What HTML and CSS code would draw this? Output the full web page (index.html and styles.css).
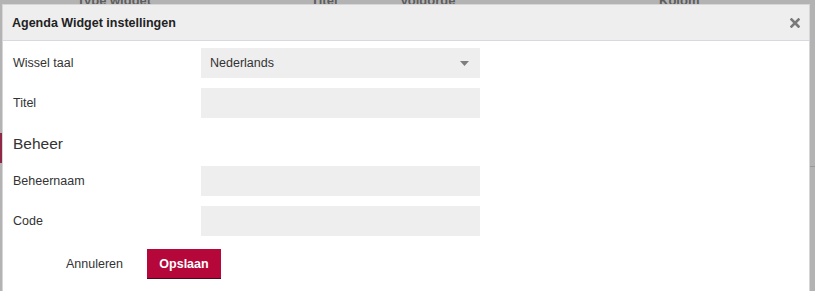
FILE: index.html
```html
<!DOCTYPE html>
<html lang="nl">
<head>
<meta charset="utf-8">
<title>Agenda Widget instellingen</title>
<link rel="stylesheet" href="styles.css">
</head>
<body>
<div class="page">
  <div class="sidebar"><div class="sidebar-active"></div></div>
  <div class="content">
    <div class="thead">
      <span class="th th-type">Type widget</span>
      <span class="th th-title">Titel</span>
      <span class="th th-order">Volgorde</span>
      <span class="th th-col">Kolom</span>
    </div>
    <div class="trow"></div>
  </div>
</div>

<div class="modal">
  <div class="modal-header">
    <h1 class="modal-title">Agenda Widget instellingen</h1>
    <button class="modal-close" aria-label="Sluiten">
      <svg width="10" height="10" viewBox="0 0 10 10"><path d="M1.5 1.5 L8.5 8.5 M8.5 1.5 L1.5 8.5" stroke="#7a7a7a" stroke-width="2.6" stroke-linecap="square"/></svg>
    </button>
  </div>
  <div class="modal-body">
    <div class="form-row">
      <label class="form-label">Wissel taal</label>
      <div class="select">
        <span>Nederlands</span>
        <svg class="caret" width="9" height="5" viewBox="0 0 9 5"><path d="M0 0 H9 L4.5 5 Z" fill="#7d7d7d"/></svg>
      </div>
    </div>
    <div class="form-row">
      <label class="form-label">Titel</label>
      <div class="input"></div>
    </div>
    <h2 class="section-title">Beheer</h2>
    <div class="form-row">
      <label class="form-label">Beheernaam</label>
      <div class="input"></div>
    </div>
    <div class="form-row">
      <label class="form-label">Code</label>
      <div class="input"></div>
    </div>
    <div class="actions">
      <button class="btn-link">Annuleren</button>
      <button class="btn-primary">Opslaan</button>
    </div>
  </div>
</div>
</body>
</html>
```

FILE: styles.css
```css
* { box-sizing: border-box; }

html, body {
  margin: 0;
  padding: 0;
  height: 100%;
  overflow: hidden;
}

body {
  background: #b3b3b3;
  font-family: "Liberation Sans", Arial, sans-serif;
  color: #333;
}

.page {
  display: flex;
  height: 100%;
}

.sidebar {
  width: 2px;
  padding-top: 133px;
}

.sidebar-active {
  height: 30px;
  background: #8e2846;
}

.content {
  flex: 1;
}

.thead {
  position: relative;
  height: 174px;
  border-bottom: 1px solid #999;
  margin-top: -7px;
  font-size: 13px;
  color: #5d5d5d;
  font-weight: bold;
}

.th {
  position: absolute;
  top: 0;
}
.th-type { left: 75px; }
.th-title { left: 309px; }
.th-order { left: 398px; }
.th-col { left: 657px; }

.modal {
  position: absolute;
  left: 2px;
  top: 4px;
  width: 808px;
  height: 300px;
  background: #fff;
  border: 1px solid #d6d6d6;
}

.modal-header {
  display: flex;
  align-items: center;
  justify-content: space-between;
  height: 36px;
  padding: 0 9px 0 9px;
  background: #eeeeee;
  border-bottom: 1px solid #d8d8e0;
}

.modal-title {
  margin: 0;
  font-size: 12.5px;
  font-weight: bold;
  color: #222;
}

.modal-close {
  border: 0;
  background: none;
  padding: 0;
  width: 10px;
  height: 10px;
  display: flex;
  margin-top: 1px;
}

.modal-body {
  padding: 7px 10px 0 10px;
}

.form-row {
  display: flex;
  align-items: center;
  margin-bottom: 10px;
}

.form-label {
  width: 188px;
  font-size: 12.5px;
  color: #333;
}

.select, .input {
  width: 279px;
  height: 30px;
  background: #eeeeee;
}

.select {
  display: flex;
  align-items: center;
  justify-content: space-between;
  padding: 0 11px 0 9px;
  font-size: 12.5px;
  color: #333;
}

.caret { margin-top: 1px; }

.section-title {
  margin: 17px 0 13px 0;
  font-size: 15.5px;
  font-weight: normal;
  color: #333;
  line-height: 18px;
}

.actions {
  display: flex;
  align-items: center;
  padding-top: 3px;
  padding-left: 41px;
}

.btn-link {
  border: 0;
  background: none;
  font-family: inherit;
  font-size: 12.5px;
  color: #333;
  padding: 0 12px;
  height: 30px;
}

.btn-primary {
  margin-left: 12px;
  border: 0;
  border-bottom: 1px solid #4a0a1c;
  background: #b5073a;
  color: #fff;
  font-family: inherit;
  font-size: 12.5px;
  font-weight: bold;
  height: 30px;
  width: 74px;
  padding: 0;
}
```
